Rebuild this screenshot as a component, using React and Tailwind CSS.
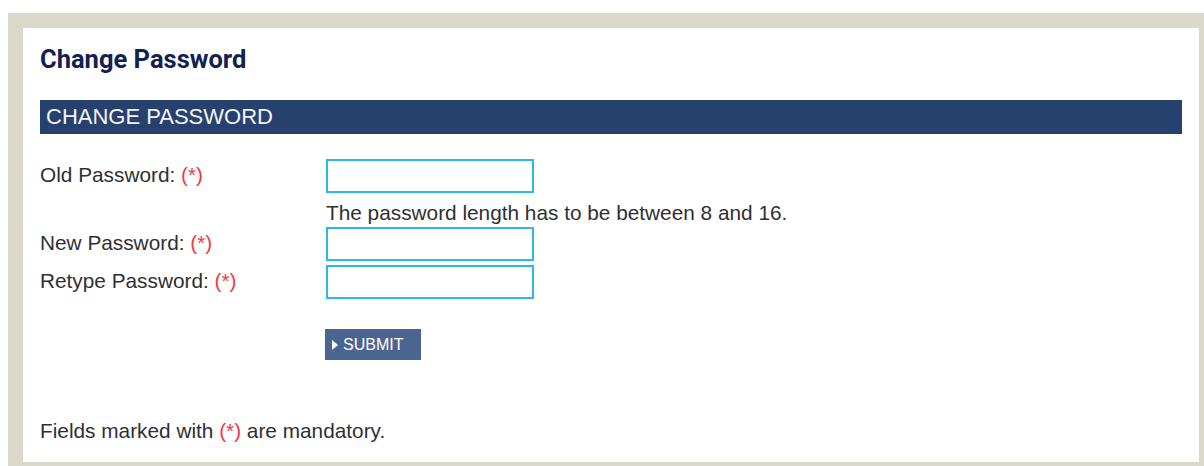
import { useState } from 'react';

const labelFont = { fontFamily: '"Liberation Sans", Arial, sans-serif' };

function Required() {
  return <span className="text-[#f03a46]">(*)</span>;
}

function Field({ label, value, onChange, className = '' }) {
  return (
    <div className={`grid grid-cols-[286px_208px] items-center h-[34px] ${className}`}>
      <label className="mb-[3px] leading-[24px]">
        {label}: <Required />
      </label>
      <input
        type="password"
        value={value}
        onChange={e => onChange(e.target.value)}
        className="h-[34px] w-[208px] border-2 border-[#2bb8e3] bg-white px-1 outline-none"
      />
    </div>
  );
}

export default function App() {
  const [form, setForm] = useState({ old: '', next: '', retype: '' });
  const set = key => v => setForm(f => ({ ...f, [key]: v }));

  return (
    <div className="bg-white pl-[8px] pt-[13px] h-[466px]">
      <div className="bg-[#dad7cb] pl-[15px] pt-[15px] pr-[5px] pb-[4px]">
        <div className="bg-white px-[17px] h-[434px] text-[20.8px] text-[#2f2f33]" style={labelFont}>
          <div className="h-[72px] pt-[16px]">
            <h1
              className="text-[25.5px] font-bold leading-[30px] text-[#112252]"
              style={{ fontFamily: 'Roboto, "Liberation Sans", sans-serif' }}
            >
              Change Password
            </h1>
          </div>

          <div className="h-[34px] bg-[#27416f] px-[6px] text-[22px] leading-[34px] text-[#f4f4f8]">
            CHANGE PASSWORD
          </div>

          <form onSubmit={e => e.preventDefault()} className="pt-[25px]">
            <Field label="Old Password" value={form.old} onChange={set('old')} />
            <div className="h-[34px] pl-[286px] pt-[6px] leading-[28px] whitespace-nowrap">
              The password length has to be between 8 and 16.
            </div>
            <Field label="New Password" value={form.next} onChange={set('next')} />
            <Field label="Retype Password" value={form.retype} onChange={set('retype')} className="mt-[4px]" />

            <div className="pl-[285px] mt-[30px]">
              <button
                type="submit"
                className="flex items-center h-[31px] w-[96px] bg-[#4b6591] pl-[7px] text-[16px] text-white"
              >
                <svg width="6" height="10" viewBox="0 0 6 10" className="mr-[5px]">
                  <path d="M0 0 L6 5 L0 10 Z" fill="#fff" />
                </svg>
                SUBMIT
              </button>
            </div>
          </form>

          <p className="mt-[59px] leading-[24px]">
            Fields marked with <Required /> are mandatory.
          </p>
        </div>
      </div>
    </div>
  );
}
